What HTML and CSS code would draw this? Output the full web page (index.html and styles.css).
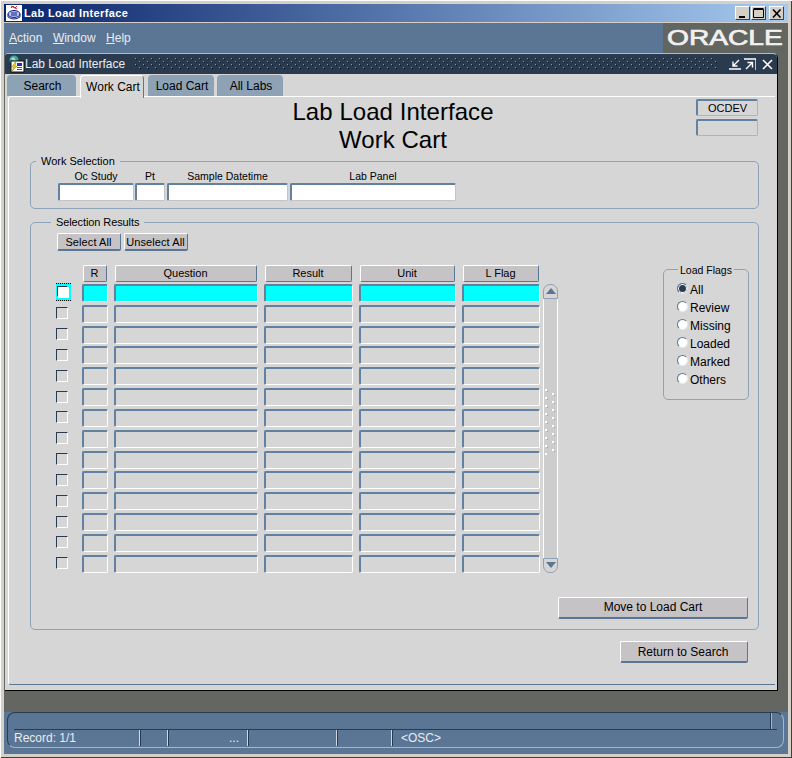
FILE: index.html
```html
<!DOCTYPE html>
<html lang="en">
<head>
    <meta charset="UTF-8">
    <title>Lab Load Interface</title>
    <link rel="stylesheet" href="styles.css">
</head>
<body>
    <svg class="defs" width="0" height="0">
        <defs>
            <pattern id="gripDark" width="8" height="6" patternUnits="userSpaceOnUse">
                <rect x="1" y="0" width="1" height="1" fill="#8a98a8"/>
                <rect x="2" y="1" width="1" height="1" fill="#0e1620"/>
                <rect x="5" y="3" width="1" height="1" fill="#8a98a8"/>
                <rect x="6" y="4" width="1" height="1" fill="#0e1620"/>
            </pattern>
            <pattern id="gripLight" width="11" height="16" patternUnits="userSpaceOnUse">
                <rect x="0" y="0" width="2" height="2" fill="#fff"/>
                <rect x="2" y="2" width="1" height="1" fill="#8fa3b8"/>
                <rect x="7" y="4" width="2" height="2" fill="#fff"/>
                <rect x="9" y="6" width="1" height="1" fill="#8fa3b8"/>
                <rect x="0" y="8" width="2" height="2" fill="#fff"/>
                <rect x="2" y="10" width="1" height="1" fill="#8fa3b8"/>
                <rect x="7" y="12" width="2" height="2" fill="#fff"/>
                <rect x="9" y="14" width="1" height="1" fill="#8fa3b8"/>
            </pattern>
        </defs>
    </svg>

    <div class="app">
        <div class="titlebar">
            <svg class="app-icon" width="16" height="16" viewBox="0 0 16 16">
                <rect width="16" height="16" fill="#fff"/>
                <path d="M5 3 L7 1 L9 3 L11 1 M5 1 L11 4" stroke="#d02020" fill="none"/>
                <ellipse cx="8" cy="9" rx="6" ry="3.5" fill="#b8c0e8" stroke="#10208a"/>
                <path d="M2 9 V12 Q8 16 14 12 V9" fill="none" stroke="#10208a"/>
                <path d="M5 8 H11 M5 10 H11" stroke="#10208a"/>
            </svg>
            <span class="app-name">Lab Load Interface</span>
            <div class="win-buttons">
                <button class="win-btn"><svg width="10" height="10" viewBox="0 0 10 10"><rect x="1" y="8" width="6" height="2"/></svg></button>
                <button class="win-btn"><svg width="11" height="10" viewBox="0 0 11 10"><path d="M0.5 1.5 H10.5 V9.5 H0.5 Z M0.5 0.5 H10.5" fill="none" stroke="#000"/></svg></button>
                <button class="win-btn win-close"><svg width="10" height="9" viewBox="0 0 10 9"><path d="M1 0.5 L8.5 8.5 M8.5 0.5 L1 8.5" fill="none" stroke="#000" stroke-width="1.6"/></svg></button>
            </div>
        </div>

        <div class="menubar">
            <nav class="menu">
                <span><u>A</u>ction</span>
                <span><u>W</u>indow</span>
                <span><u>H</u>elp</span>
            </nav>
            <div class="logo"><span>ORACLE</span></div>
        </div>

        <div class="desktop">
            <div class="inner-window">
                <div class="inner-title">
                    <svg class="doc-icon" width="18" height="18" viewBox="0 0 18 18">
                        <circle cx="7" cy="5" r="4.5" fill="#3aa890"/>
                        <path d="M3 4 L7 2 L9 6 Z" fill="#a8d8f0"/>
                        <rect x="4" y="6" width="13" height="11" fill="#fff" stroke="#111"/>
                        <rect x="10" y="8" width="5" height="3" fill="#2030c0"/>
                        <path d="M10 12.5 H15 M10 14.5 H15" stroke="#d02020"/>
                        <path d="M8 7 L5 12 H7 L5 16 L10 11 H8 L9 7 Z" fill="#f0d020" stroke="#806000" stroke-width="0.4"/>
                    </svg>
                    <span class="inner-name">Lab Load Interface</span>
                    <svg class="grip-bar" height="12"><rect width="100%" height="100%" fill="url(#gripDark)"/></svg>
                    <svg class="inner-ctl" width="12" height="12" viewBox="0 0 12 12"><path d="M0 11 H12 M10 2 L4 8 M4 3.5 V8 H8.5" fill="none" stroke="#fff" stroke-width="1.4"/></svg>
                    <svg class="inner-ctl" width="12" height="12" viewBox="0 0 12 12"><path d="M0 1 H12 V12 M2 11 L8 5 M3.5 4.5 H8.5 V9.5" fill="none" stroke="#fff" stroke-width="1.4"/></svg>
                    <svg class="inner-ctl close-ctl" width="11" height="11" viewBox="0 0 11 11"><path d="M1 1 L10 10 M10 1 L1 10" fill="none" stroke="#fff" stroke-width="1.6"/></svg>
                </div>

                <div class="tabs">
                    <div class="tab tab-search">Search</div>
                    <div class="tab tab-work active">Work Cart</div>
                    <div class="tab tab-load">Load Cart</div>
                    <div class="tab tab-labs">All Labs</div>
                </div>

                <div class="panel">
                    <header class="heading">
                        <h1>Lab Load Interface<br>Work Cart</h1>
                        <div class="env">
                            <div class="env-box">OCDEV</div>
                            <div class="env-box"></div>
                        </div>
                    </header>

                    <section class="group work-selection">
                        <span class="legend legend-work">Work Selection</span>
                        <label class="field f-study">Oc Study<input type="text"></label>
                        <label class="field f-pt">Pt<input type="text"></label>
                        <label class="field f-date">Sample Datetime<input type="text"></label>
                        <label class="field f-panel">Lab Panel<input type="text"></label>
                    </section>

                    <section class="group results">
                        <span class="legend legend-results">Selection Results</span>
                        <div class="results-body">
                            <div class="results-main">
                                <div class="select-btns">
                                    <button class="btn btn-small">Select All</button>
                                    <button class="btn btn-small">Unselect All</button>
                                </div>
                                <div class="table" id="table">
                                    <span></span>
                                    <div class="col-head">R</div>
                                    <div class="col-head">Question</div>
                                    <div class="col-head">Result</div>
                                    <div class="col-head">Unit</div>
                                    <div class="col-head">L Flag</div>
                                    <div class="scrollbar">
                                        <div class="scroll-end scroll-up"><svg width="10" height="6" viewBox="0 0 10 6"><path d="M5 0 L10 6 H0 Z" fill="#5b7595"/></svg></div>
                                        <div class="scroll-track"><svg class="scroll-grip" width="11" height="66"><rect width="11" height="66" fill="url(#gripLight)"/></svg></div>
                                        <div class="scroll-end scroll-down"><svg width="10" height="6" viewBox="0 0 10 6"><path d="M0 0 H10 L5 6 Z" fill="#5b7595"/></svg></div>
                                    </div>
                                </div>
                            </div>
                            <aside class="group flags">
                                <span class="legend legend-flags">Load Flags</span>
                                <label class="flag"><input type="radio" name="flag" checked>All</label>
                                <label class="flag"><input type="radio" name="flag">Review</label>
                                <label class="flag"><input type="radio" name="flag">Missing</label>
                                <label class="flag"><input type="radio" name="flag">Loaded</label>
                                <label class="flag"><input type="radio" name="flag">Marked</label>
                                <label class="flag"><input type="radio" name="flag">Others</label>
                            </aside>
                        </div>
                        <div class="move-row">
                            <button class="btn btn-move">Move to Load Cart</button>
                        </div>
                    </section>

                    <div class="return-row">
                        <button class="btn btn-return">Return to Search</button>
                    </div>
                </div>
            </div>
        </div>

        <footer class="status">
            <div class="status-frame">
                <div class="status-top"><span class="status-mark"></span></div>
                <div class="status-cells">
                    <span class="s-record">Record: 1/1</span>
                    <span class="s-a"></span>
                    <span class="s-list">...</span>
                    <span class="s-b"></span>
                    <span class="s-c"></span>
                    <span class="s-osc">&lt;OSC&gt;</span>
                </div>
            </div>
        </footer>
    </div>

    <script>
        // 14 empty rows, first one is the current record
        const table = document.getElementById("table");
        for (let i = 0; i < 14; i++) {
            const check = document.createElement("input");
            check.type = "checkbox";
            check.className = i === 0 ? "row-check current" : "row-check";
            const wrap = document.createElement("div");
            wrap.className = "check-cell";
            wrap.appendChild(check);
            table.appendChild(wrap);
            for (let c = 0; c < 5; c++) {
                const cell = document.createElement("div");
                cell.className = i === 0 ? "cell cell-current" : "cell";
                table.appendChild(cell);
            }
        }
    </script>
</body>
</html>
```

FILE: styles.css
```css
* {
    box-sizing: border-box;
}

body {
    margin: 0;
    width: 792px;
    height: 758px;
    overflow: hidden;
    font-family: "Liberation Sans", Arial, sans-serif;
    font-size: 12px;
    letter-spacing: 0;
    color: #000;
    background-color: #d4d0c8;
}

.defs {
    position: absolute;
}

.app {
    height: 758px;
    padding: 4px;
    display: flex;
    flex-direction: column;
    box-shadow: inset 1px 1px 0 #fff, inset -1px -1px 0 #404040;
}

/* outer window */
.titlebar {
    height: 18px;
    flex: none;
    display: flex;
    align-items: center;
    padding-left: 2px;
    background: linear-gradient(to right, #0a246a, #a6caf0);
}

.app-icon {
    flex: none;
}

.app-name {
    margin-left: 2px;
    color: #fff;
    font-weight: bold;
    font-size: 11px;
    letter-spacing: 0.35px;
}

.win-buttons {
    margin-left: auto;
    margin-right: 4px;
    display: flex;
}

.win-btn {
    width: 15px;
    height: 14px;
    padding: 0;
    margin-left: 1px;
    display: flex;
    align-items: center;
    justify-content: center;
    background-color: #d4d0c8;
    border: 1px solid;
    border-color: #fff #404040 #404040 #fff;
}

.win-close {
    margin-left: 3px;
}

.menubar {
    height: 30px;
    flex: none;
    margin-top: 1px;
    display: flex;
    justify-content: space-between;
    background-color: #5b7595;
}

.menu {
    display: flex;
    gap: 10.5px;
    padding: 8px 0 0 5px;
    color: #e8edf2;
}

.logo {
    width: 125px;
    padding: 5px 0 0 4px;
    background-color: #636560;
    overflow: hidden;
}

.logo span {
    display: inline-block;
    font-size: 22px;
    line-height: 20px;
    color: #f0f0f0;
    -webkit-text-stroke: 0.7px #f0f0f0;
    transform: scaleX(1.28);
    transform-origin: left;
}

.desktop {
    height: 659px;
    flex: none;
    padding-left: 1px;
    background-color: #646662;
}

.inner-window {
    width: 773px;
    height: 638px;
    display: flex;
    flex-direction: column;
    background-color: #d6d6d6;
    border-top: 1px solid #aebccb;
    border-right: 1px solid #000;
    border-bottom: 1px solid #000;
    border-radius: 3px 5px 0 0;
}

.inner-title {
    height: 20px;
    flex: none;
    display: flex;
    align-items: center;
    padding: 0 4px 0 2px;
    background-color: #2a3b50;
    color: #e8edf2;
    border-radius: 2px 4px 0 0;
}

.doc-icon {
    flex: none;
}

.grip-bar {
    flex: 1;
    margin: 0 8px 0 9px;
}

.inner-ctl {
    flex: none;
    margin-left: 3px;
}

.close-ctl {
    margin-left: 6px;
}

/* tabs */
.tabs {
    height: 22px;
    flex: none;
    display: flex;
    padding-left: 2px;
}

.tab {
    height: 21px;
    margin-top: 1px;
    padding-left: 2px;
    text-align: center;
    line-height: 22px;
    background-color: #8ea2b6;
    border-radius: 4px 4px 0 0;
}

.tab-search {
    width: 69px;
}

.tab-work {
    width: 64px;
    margin-left: 4px;
}

.tab-load {
    width: 66px;
    margin-left: 4px;
}

.tab-labs {
    width: 66px;
    margin-left: 3px;
}

.tab.active {
    height: 23px;
    position: relative;
    background-color: #d6d6d6;
    border-top: 1px solid #fff;
    border-left: 1px solid #fff;
    border-right: 1px solid #5b7595;
    z-index: 1;
}

/* main canvas */
.panel {
    margin-left: 3px;
    width: 767px;
    height: 589px;
    padding: 0 16px 0 21px;
    border-top: 1px solid #fff;
    border-left: 1px solid #fff;
    border-bottom: 1px solid #5b7595;
    border-radius: 3px 0 0 3px;
}

.heading {
    height: 64px;
    position: relative;
    display: flex;
    justify-content: center;
}

h1 {
    margin: 1px 3px 0 0;
    font-size: 24px;
    font-weight: normal;
    line-height: 28px;
    letter-spacing: 0.05px;
    text-align: center;
}

.env {
    position: absolute;
    top: 2px;
    right: 1px;
    width: 62px;
    font-size: 11px;
}

.env-box {
    height: 17px;
    margin-bottom: 3px;
    text-align: center;
    line-height: 15px;
    border: 1px solid;
    border-width: 2px 1px 1px 2px;
    border-color: #62809f #a8b6c4 #a8b6c4 #62809f;
    border-radius: 2px;
}

.group {
    position: relative;
    border: 1px solid #8fa3b8;
    border-radius: 5px;
}

.legend {
    position: absolute;
    top: -7px;
    font-size: 11px;
    line-height: 13px;
    padding: 0 5px;
    background-color: #d6d6d6;
}

.legend-work {
    left: 5px;
}

.legend-results {
    left: 20px;
    letter-spacing: -0.1px;
}

.legend-flags {
    top: -6px;
    left: 14px;
    padding: 0 2px;
    font-size: 10.5px;
}

.work-selection {
    height: 48px;
    padding: 8px 0 0 27px;
    display: flex;
    gap: 2px;
}

.field {
    display: flex;
    flex-direction: column;
    align-items: center;
    font-size: 10.5px;
    line-height: 13px;
}

.field input {
    display: block;
    width: 100%;
    height: 18px;
    padding: 0;
    background-color: #fff;
    border: 1px solid;
    border-width: 2px 1px 1px 2px;
    border-color: #62809f #c4c4c4 #c4c4c4 #62809f;
    border-radius: 2px;
}

.f-study {
    width: 76px;
    margin-right: -1px;
}

.f-pt {
    width: 30px;
}

.f-date {
    width: 121px;
}

.f-panel {
    width: 166px;
}

.results {
    margin-top: 13px;
    height: 408px;
    padding: 10px 9px 0 26px;
}

.results-body {
    display: flex;
    justify-content: space-between;
}

.select-btns {
    display: flex;
    gap: 3px;
    margin-bottom: 14px;
}

.btn {
    height: 18px;
    padding: 0;
    font: inherit;
    color: #000;
    background-color: #c6c3c6;
    border: 1px solid;
    border-width: 1px 1px 2px 1px;
    border-color: #fff #5b7595 #5b7595 #fff;
    border-radius: 2px;
}

.btn-small {
    width: 64px;
    padding-right: 1px;
    font-size: 11px;
    letter-spacing: 0.1px;
    white-space: nowrap;
}

/* record table */
.table {
    display: grid;
    grid-template-columns: 18px 24px 142px 87px 95px 76px 15px;
    grid-template-rows: 16px repeat(14, 18px);
    column-gap: 8px;
    row-gap: 2.85px;
}

.col-head {
    height: 17px;
    padding-right: 1px;
    font-size: 11px;
    text-align: center;
    line-height: 15px;
    background-color: #c6c3c6;
    border: 1px solid;
    border-color: #fff #5b7595 #5b7595 #fff;
    border-radius: 2px;
}

.check-cell {
    grid-column: 1;
    display: flex;
    align-items: center;
}

.row-check {
    appearance: none;
    flex: none;
    width: 12px;
    height: 12px;
    margin: -1px 0 0 -1px;
    background-color: #d6d6d6;
    border: 1px solid;
    border-color: #2a3b50 #fff #fff #2a3b50;
}

.row-check.current {
    width: 15px;
    height: 18px;
    border: 0;
    border-top: 1px dotted #000;
    border-bottom: 1px dotted #000;
    background:
        linear-gradient(#fff, #fff) 2px 3px / 9px 9px no-repeat,
        linear-gradient(#2a3b50, #2a3b50) 1px 2px / 10px 10px no-repeat,
        linear-gradient(#fff, #fff) 2px 3px / 11px 11px no-repeat,
        #00ffff;
}

.cell {
    margin: 0 -1px;
    border: 1px solid;
    border-width: 2px 1px 1px 2px;
    border-color: #62809f #fff #fff #62809f;
    border-radius: 2px;
}

.cell-current {
    background-color: #00ffff;
}

.scrollbar {
    grid-column: 7;
    grid-row: 2 / 16;
    width: 15px;
    margin-left: -4px;
    display: flex;
    flex-direction: column;
}

.scroll-end {
    height: 15px;
    flex: none;
    display: flex;
    align-items: center;
    justify-content: center;
    border: 1px solid #8fa3b8;
}

.scroll-up {
    border-radius: 7px 7px 0 0;
}

.scroll-down {
    border-radius: 0 0 7px 7px;
}

.scroll-track {
    flex: 1;
    padding-top: 90px;
    background-color: #cdcdcd;
    border-left: 1px solid #fff;
    border-right: 1px solid #fff;
    overflow: hidden;
}

.scroll-grip {
    display: block;
    margin-left: 1px;
}

.flags {
    width: 86px;
    height: 131px;
    margin-top: 36px;
    padding-top: 11px;
}

.flag {
    display: flex;
    align-items: center;
    height: 18px;
    padding-left: 13px;
}

.flag input {
    appearance: none;
    width: 11px;
    height: 11px;
    margin: -3px 2px 0 0;
    background-color: #fff;
    border: 1px solid;
    border-color: #5b7595 #e8e8e8 #e8e8e8 #5b7595;
    border-radius: 50%;
}

.flag input:checked {
    background-color: #2a3b50;
    box-shadow: inset 0 0 0 1px #fff;
}

.move-row {
    margin: 24px 1px 0 0;
    display: flex;
    justify-content: flex-end;
}

.btn-move {
    width: 190px;
    height: 22px;
}

.return-row {
    margin: 11px 11px 0 0;
    display: flex;
    justify-content: flex-end;
}

.btn-return {
    width: 128px;
    height: 22px;
    padding-right: 2px;
}

/* status bar */
.status {
    flex: 1;
    padding: 0 4px 0 3px;
    background-color: #5b7595;
    color: #e8edf2;
}

.status-frame {
    height: 36px;
    padding: 0 6px;
    border: 1px solid;
    border-color: #2a3b50 #a8b6c4 #a8b6c4 #2a3b50;
    border-radius: 8px;
}

.status-top {
    height: 17px;
    display: flex;
    justify-content: flex-end;
    border-bottom: 1px solid #2a3b50;
}

.status-mark {
    margin-right: 5px;
    width: 2px;
    background-color: #2a3b50;
    border-right: 1px solid #a8b6c4;
}

.status-cells {
    height: 17px;
    display: flex;
    line-height: 17px;
}

.status-cells span {
    height: 16px;
    border-right: 1px solid #d0d8e0;
    box-shadow: 1px 0 0 #2a3b50;
}

.s-record {
    width: 126px;
}

.s-a {
    width: 28px;
}

.s-list {
    width: 80px;
    padding-right: 8px;
    text-align: right;
}

.s-b {
    width: 89px;
}

.s-c {
    width: 55px;
}

.status-cells .s-osc {
    padding-left: 9px;
    border-right: 0;
    box-shadow: none;
}
```
